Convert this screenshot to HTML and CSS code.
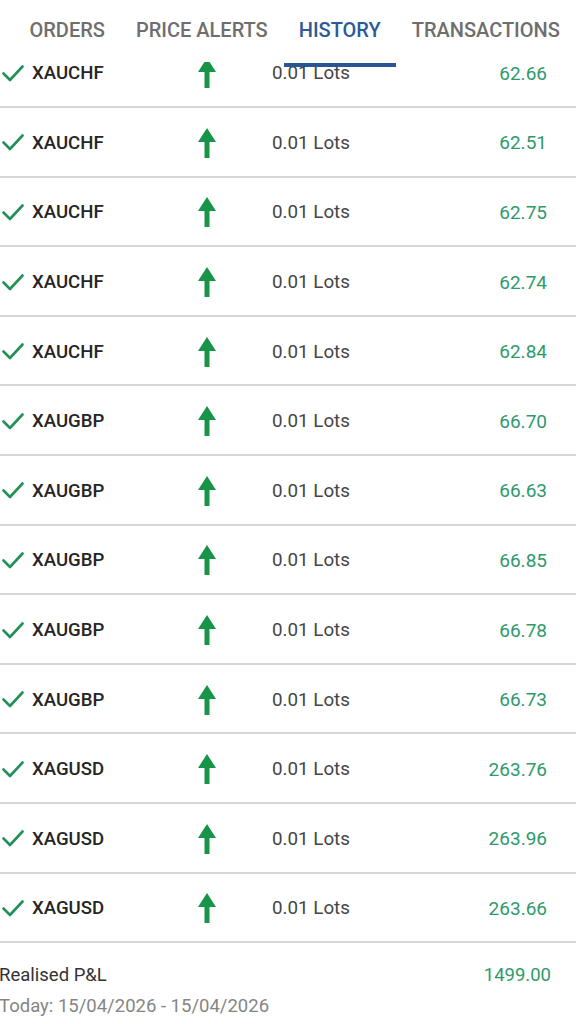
FILE: index.html
```html
<!DOCTYPE html>
<html>
<head>
<meta charset="utf-8">
<link rel="stylesheet" href="styles.css">
</head>
<body>
<div class="screen">
  <header class="tabs">
    <div class="tab">ORDERS</div>
    <div class="tab">PRICE ALERTS</div>
    <div class="tab active">HISTORY<span class="indicator"></span></div>
    <div class="tab">TRANSACTIONS</div>
  </header>
  <div class="list-view">
    <div class="list">
      <div class="row"><svg class="check" viewBox="0 0 22 17"><polyline points="1.5,8.5 8,15 20.5,1.5"/></svg><span class="sym">XAUCHF</span><svg class="arrow" viewBox="0 0 18 30"><polygon points="9,0 18,14 11.5,14 11.5,30 6.5,30 6.5,14 0,14"/></svg><span class="lots">0.01 Lots</span><span class="val">62.66</span></div>
      <div class="row"><svg class="check" viewBox="0 0 22 17"><polyline points="1.5,8.5 8,15 20.5,1.5"/></svg><span class="sym">XAUCHF</span><svg class="arrow" viewBox="0 0 18 30"><polygon points="9,0 18,14 11.5,14 11.5,30 6.5,30 6.5,14 0,14"/></svg><span class="lots">0.01 Lots</span><span class="val">62.51</span></div>
      <div class="row"><svg class="check" viewBox="0 0 22 17"><polyline points="1.5,8.5 8,15 20.5,1.5"/></svg><span class="sym">XAUCHF</span><svg class="arrow" viewBox="0 0 18 30"><polygon points="9,0 18,14 11.5,14 11.5,30 6.5,30 6.5,14 0,14"/></svg><span class="lots">0.01 Lots</span><span class="val">62.75</span></div>
      <div class="row"><svg class="check" viewBox="0 0 22 17"><polyline points="1.5,8.5 8,15 20.5,1.5"/></svg><span class="sym">XAUCHF</span><svg class="arrow" viewBox="0 0 18 30"><polygon points="9,0 18,14 11.5,14 11.5,30 6.5,30 6.5,14 0,14"/></svg><span class="lots">0.01 Lots</span><span class="val">62.74</span></div>
      <div class="row"><svg class="check" viewBox="0 0 22 17"><polyline points="1.5,8.5 8,15 20.5,1.5"/></svg><span class="sym">XAUCHF</span><svg class="arrow" viewBox="0 0 18 30"><polygon points="9,0 18,14 11.5,14 11.5,30 6.5,30 6.5,14 0,14"/></svg><span class="lots">0.01 Lots</span><span class="val">62.84</span></div>
      <div class="row"><svg class="check" viewBox="0 0 22 17"><polyline points="1.5,8.5 8,15 20.5,1.5"/></svg><span class="sym">XAUGBP</span><svg class="arrow" viewBox="0 0 18 30"><polygon points="9,0 18,14 11.5,14 11.5,30 6.5,30 6.5,14 0,14"/></svg><span class="lots">0.01 Lots</span><span class="val">66.70</span></div>
      <div class="row"><svg class="check" viewBox="0 0 22 17"><polyline points="1.5,8.5 8,15 20.5,1.5"/></svg><span class="sym">XAUGBP</span><svg class="arrow" viewBox="0 0 18 30"><polygon points="9,0 18,14 11.5,14 11.5,30 6.5,30 6.5,14 0,14"/></svg><span class="lots">0.01 Lots</span><span class="val">66.63</span></div>
      <div class="row"><svg class="check" viewBox="0 0 22 17"><polyline points="1.5,8.5 8,15 20.5,1.5"/></svg><span class="sym">XAUGBP</span><svg class="arrow" viewBox="0 0 18 30"><polygon points="9,0 18,14 11.5,14 11.5,30 6.5,30 6.5,14 0,14"/></svg><span class="lots">0.01 Lots</span><span class="val">66.85</span></div>
      <div class="row"><svg class="check" viewBox="0 0 22 17"><polyline points="1.5,8.5 8,15 20.5,1.5"/></svg><span class="sym">XAUGBP</span><svg class="arrow" viewBox="0 0 18 30"><polygon points="9,0 18,14 11.5,14 11.5,30 6.5,30 6.5,14 0,14"/></svg><span class="lots">0.01 Lots</span><span class="val">66.78</span></div>
      <div class="row"><svg class="check" viewBox="0 0 22 17"><polyline points="1.5,8.5 8,15 20.5,1.5"/></svg><span class="sym">XAUGBP</span><svg class="arrow" viewBox="0 0 18 30"><polygon points="9,0 18,14 11.5,14 11.5,30 6.5,30 6.5,14 0,14"/></svg><span class="lots">0.01 Lots</span><span class="val">66.73</span></div>
      <div class="row"><svg class="check" viewBox="0 0 22 17"><polyline points="1.5,8.5 8,15 20.5,1.5"/></svg><span class="sym">XAGUSD</span><svg class="arrow" viewBox="0 0 18 30"><polygon points="9,0 18,14 11.5,14 11.5,30 6.5,30 6.5,14 0,14"/></svg><span class="lots">0.01 Lots</span><span class="val">263.76</span></div>
      <div class="row"><svg class="check" viewBox="0 0 22 17"><polyline points="1.5,8.5 8,15 20.5,1.5"/></svg><span class="sym">XAGUSD</span><svg class="arrow" viewBox="0 0 18 30"><polygon points="9,0 18,14 11.5,14 11.5,30 6.5,30 6.5,14 0,14"/></svg><span class="lots">0.01 Lots</span><span class="val">263.96</span></div>
      <div class="row"><svg class="check" viewBox="0 0 22 17"><polyline points="1.5,8.5 8,15 20.5,1.5"/></svg><span class="sym">XAGUSD</span><svg class="arrow" viewBox="0 0 18 30"><polygon points="9,0 18,14 11.5,14 11.5,30 6.5,30 6.5,14 0,14"/></svg><span class="lots">0.01 Lots</span><span class="val">263.66</span></div>
    </div>
    <div class="summary">
      <div class="summary-line">
        <span class="summary-label">Realised P&amp;L</span>
        <span class="summary-val">1499.00</span>
      </div>
      <div class="summary-date">Today: 15/04/2026 - 15/04/2026</div>
    </div>
  </div>
</div>
</body>
</html>
```

FILE: styles.css
```css
* { box-sizing: border-box; }
html, body {
  margin: 0;
  padding: 0;
  background: #ffffff;
}
body {
  width: 576px;
  height: 1024px;
  overflow: hidden;
  font-family: Roboto, "Liberation Sans", Arial, sans-serif;
}
.screen {
  width: 576px;
  height: 1024px;
  display: flex;
  flex-direction: column;
  overflow: hidden;
}
.tabs {
  position: relative;
  z-index: 2;
  height: 62px;
  flex: none;
  display: flex;
  align-items: flex-start;
  padding: 17px 0 0 14px;
  background: #ffffff;
}
.tab {
  position: relative;
  padding: 0 15.5px;
  font-size: 20px;
  line-height: 26px;
  font-weight: 500;
  color: #6e6e6e;
  white-space: nowrap;
}
.tab.active {
  color: #2c5a99;
}
.indicator {
  position: absolute;
  left: 1px;
  right: 0;
  top: 46px;
  height: 4px;
  background: #2a5593;
}
.list-view {
  flex: 1;
  overflow: hidden;
}
.list {
  margin-top: -23.5px;
}
.row {
  height: 69.6px;
  display: flex;
  align-items: center;
  border-bottom: 2px solid #d6d6d6;
  padding-right: 29px;
  padding-top: 2px;
}
.check {
  width: 22px;
  height: 17px;
  margin-left: 2px;
  margin-right: 8px;
  flex: none;
}
.check polyline {
  fill: none;
  stroke: #23905a;
  stroke-width: 2.6;
  stroke-linecap: round;
  stroke-linejoin: round;
}
.sym {
  width: 166px;
  font-size: 18.6px;
  font-weight: 500;
  color: #252525;
}
.arrow {
  width: 18px;
  height: 30px;
  flex: none;
}
.arrow polygon {
  fill: #179447;
}
.lots {
  margin-left: 56px;
  flex: 1;
  font-size: 18.8px;
  color: #454545;
}
.val {
  font-size: 19px;
  color: #2e9a6b;
}
.summary {
  padding: 20px 25px 0 0;
}
.summary-line {
  display: flex;
  justify-content: space-between;
  align-items: center;
  height: 24px;
}
.summary-label {
  font-size: 18.5px;
  color: #333333;
  margin-left: -1px;
}
.summary-val {
  font-size: 18.5px;
  color: #2e9a6b;
}
.summary-date {
  margin-top: 7px;
  margin-left: -1px;
  font-size: 18.5px;
  line-height: 24px;
  color: #858585;
}
```
